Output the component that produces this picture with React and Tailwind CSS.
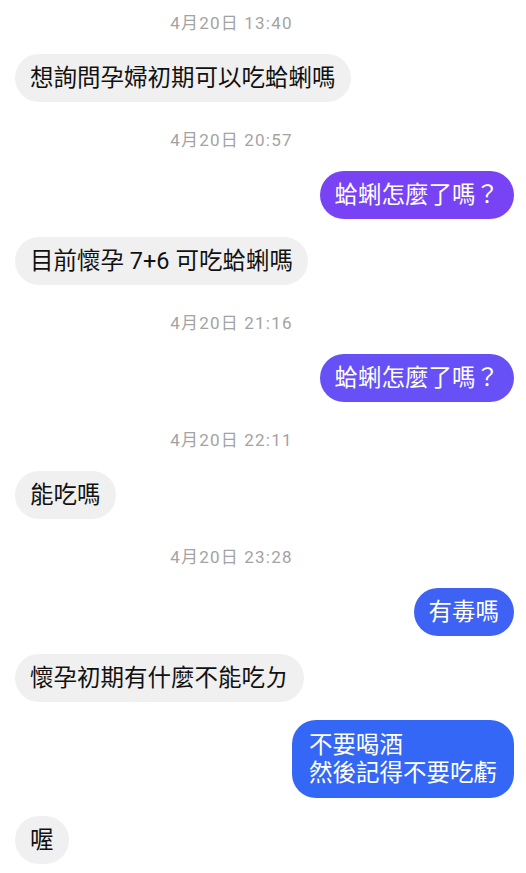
import React from 'react';

const font = { fontFamily: 'Roboto, "Noto Sans CJK TC", sans-serif' };

const messages = [
    { type: 'time', text: '4月20日 13:40', first: true },
    { type: 'in', text: '想詢問孕婦初期可以吃蛤蜊嗎' },
    { type: 'time', text: '4月20日 20:57' },
    { type: 'out', text: '蛤蜊怎麼了嗎？', color: 'bg-[#7843f5]' },
    { type: 'in', text: '目前懷孕 7+6 可吃蛤蜊嗎' },
    { type: 'time', text: '4月20日 21:16' },
    { type: 'out', text: '蛤蜊怎麼了嗎？', color: 'bg-[#6650f6]' },
    { type: 'time', text: '4月20日 22:11' },
    { type: 'in', text: '能吃嗎' },
    { type: 'time', text: '4月20日 23:28' },
    { type: 'out', text: '有毒嗎', color: 'bg-[#3d62f4]' },
    { type: 'in', text: '懷孕初期有什麼不能吃ㄉ' },
    { type: 'out', text: '不要喝酒\n然後記得不要吃虧', color: 'bg-[#3467f5]', multi: true },
    { type: 'in', text: '喔' },
];

function Timestamp({ text, first }) {
    return (
        <div className={`${first ? 'mt-0' : 'mt-[10px]'} mb-[3px] mr-[66px] h-[20px] text-center text-[17px] leading-[20px] tracking-[1.2px] text-[#a3a3a3]`}>
            {text}
        </div>
    );
}

function Bubble({ msg }) {
    const mine = msg.type === 'out';
    return (
        <div className={`flex ${mine ? 'justify-end' : 'justify-start'}`}>
            <div
                className={`whitespace-pre-line text-[23.5px] leading-[28px] ${
                    msg.multi ? 'rounded-[24px] px-[17px] py-[11px]' : 'rounded-full px-[15px] py-[10px]'
                } ${mine ? `${msg.color} text-white` : 'bg-[#f0f0f0] text-[#111]'}`}
            >
                {msg.text}
            </div>
        </div>
    );
}

export default function App() {
    return (
        <div className="min-h-screen bg-white pl-[15px] pr-[12px] pt-[13px]" style={font}>
            <div className="flex flex-col gap-[18px]">
                {messages.map((m, i) =>
                    m.type === 'time' ? <Timestamp key={i} text={m.text} first={m.first} /> : <Bubble key={i} msg={m} />
                )}
            </div>
        </div>
    );
}
